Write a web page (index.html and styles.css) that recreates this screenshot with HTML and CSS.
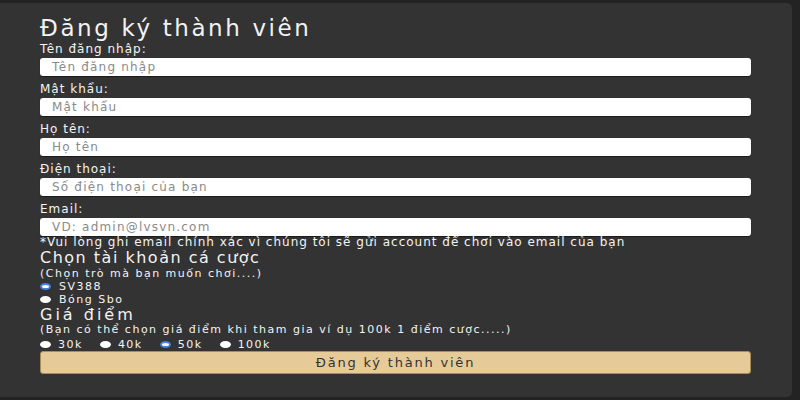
FILE: index.html
```html
<!DOCTYPE html>
<html lang="vi">
<head>
<meta charset="utf-8">
<title>Đăng ký thành viên</title>
<link rel="stylesheet" href="styles.css">
</head>
<body>
<div class="panel">
  <h1 class="title">Đăng ký thành viên</h1>
  <div class="field">
    <label class="label">Tên đăng nhập:</label>
    <input class="input" type="text" placeholder="Tên đăng nhập">
  </div>
  <div class="field">
    <label class="label">Mật khẩu:</label>
    <input class="input" type="password" placeholder="Mật khẩu">
  </div>
  <div class="field">
    <label class="label">Họ tên:</label>
    <input class="input" type="text" placeholder="Họ tên">
  </div>
  <div class="field">
    <label class="label">Điện thoại:</label>
    <input class="input" type="text" placeholder="Số điện thoại của bạn">
  </div>
  <div class="field last">
    <label class="label">Email:</label>
    <input class="input" type="text" placeholder="VD: admin@lvsvn.com">
  </div>
  <p class="note">*Vui lòng ghi email chính xác vì chúng tôi sẽ gửi account để chơi vào email của bạn</p>
  <h2 class="heading h-game">Chọn tài khoản cá cược</h2>
  <p class="hint">(Chọn trò mà bạn muốn chơi....)</p>
  <label class="opt"><input class="radio" type="radio" name="game" checked><span>SV388</span></label>
  <label class="opt"><input class="radio" type="radio" name="game"><span>Bóng Sbo</span></label>
  <h2 class="heading h-price">Giá điểm</h2>
  <p class="hint">(Bạn có thể chọn giá điểm khi tham gia ví dụ 100k 1 điểm cược.....)</p>
  <div class="prices">
    <label class="opt"><input class="radio" type="radio" name="price"><span>30k</span></label>
    <label class="opt"><input class="radio" type="radio" name="price"><span>40k</span></label>
    <label class="opt"><input class="radio" type="radio" name="price" checked><span>50k</span></label>
    <label class="opt"><input class="radio" type="radio" name="price"><span>100k</span></label>
  </div>
  <button class="submit" type="button">Đăng ký thành viên</button>
</div>
</body>
</html>
```

FILE: styles.css
```css
* { box-sizing: border-box; }
html, body { margin: 0; padding: 0; }
body {
  background: #232323;
  font-family: "DejaVu Sans", "Open Sans", sans-serif;
  color: #f0f0f0;
  width: 800px;
  height: 400px;
  overflow: hidden;
}
.panel {
  margin: 3px 8px 0 0;
  height: 394px;
  background: #333333;
  border-radius: 0 5px 5px 0;
  padding: 11px 41px 0 40px;
}
.title {
  margin: 0;
  font-weight: normal;
  font-size: 23px;
  line-height: 28px;
  letter-spacing: 2.6px;
  color: #f2f2f2;
}
.field { display: flex; flex-direction: column; margin-bottom: 6px; }
.field.last { margin-bottom: 0; }
.label {
  font-size: 12px;
  line-height: 14px;
  margin-bottom: 2px;
  letter-spacing: 1px;
  color: #f4f4f4;
}
.input {
  height: 18px;
  width: 100%;
  border: 0;
  border-radius: 3px;
  background: #fff;
  padding: 0 12px;
  font-family: inherit;
  font-size: 12px;
  letter-spacing: 1.2px;
  color: #333;
  box-shadow: 0 1px 1px rgba(0,0,0,0.5);
}
.input::placeholder { color: #8a8a8a; }
.note {
  margin: 0;
  font-size: 12px;
  line-height: 13px;
  letter-spacing: 1px;
  color: #f4f4f4;
}
.heading {
  margin: 0;
  font-weight: normal;
  font-size: 16px;
  color: #f2f2f2;
}
.h-game { line-height: 18px; letter-spacing: 1.5px; }
.h-price { line-height: 17px; letter-spacing: 3px; }
.hint {
  margin: 0;
  font-size: 11px;
  line-height: 13px;
  letter-spacing: 1.5px;
  color: #f4f4f4;
}
.opt {
  display: flex;
  align-items: center;
  font-size: 11px;
  line-height: 13px;
  letter-spacing: 1.5px;
  color: #f4f4f4;
}
.radio {
  appearance: none;
  -webkit-appearance: none;
  margin: 0 8px 0 0;
  width: 11px;
  height: 7px;
  border-radius: 50%;
  background: #fff;
  border: 0;
}
.radio:checked {
  border: 2px solid #3f82e4;
  background: #fff;
}
.prices {
  display: flex;
  gap: 17px;
  margin-top: 2px;
}
.prices .radio { margin-right: 7px; }
.submit {
  display: block;
  width: 100%;
  height: 23px;
  margin-top: 0;
  background: #e6ca98;
  border: 1px solid #a88c5c;
  border-radius: 3px;
  font-family: inherit;
  font-size: 13px;
  letter-spacing: 1.8px;
  color: #333;
  padding: 0;
}
```
